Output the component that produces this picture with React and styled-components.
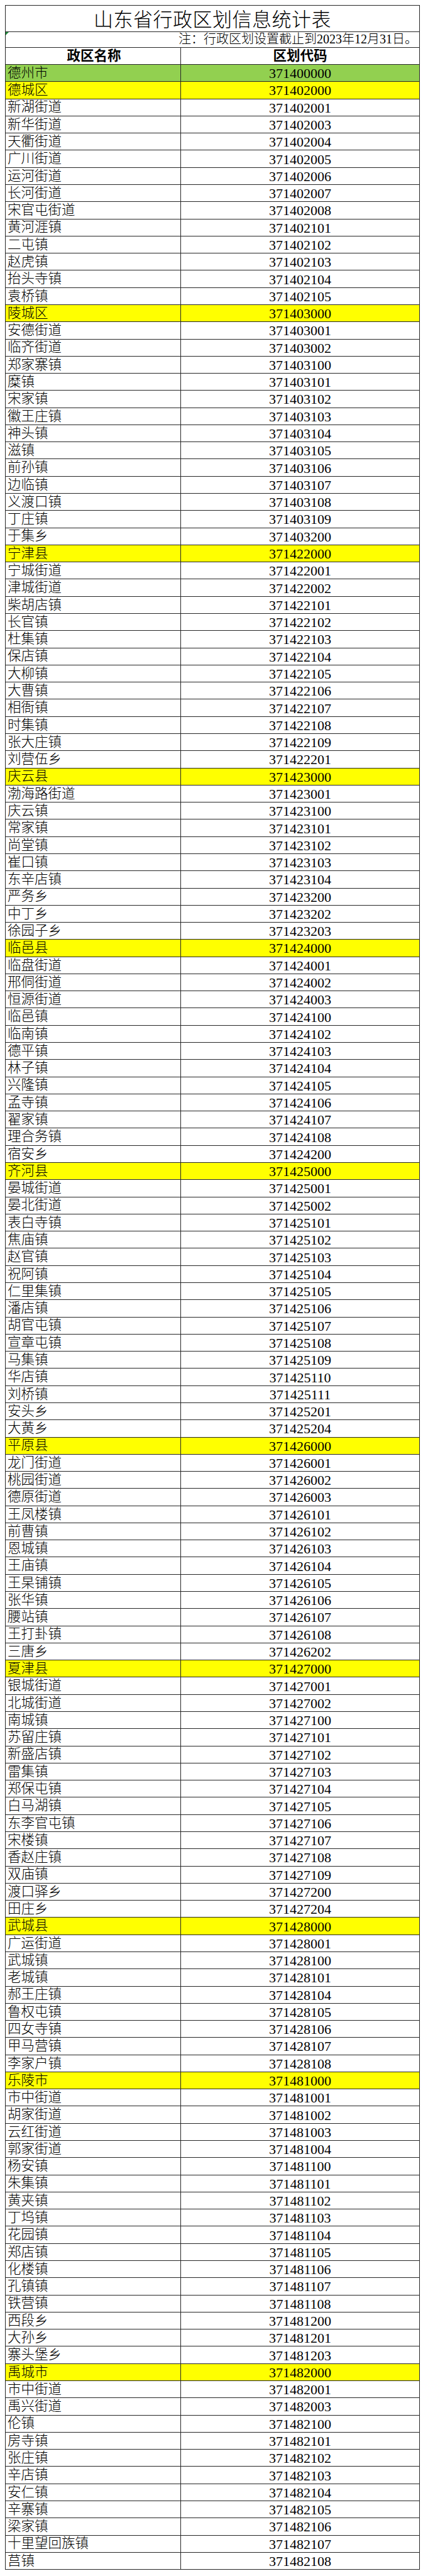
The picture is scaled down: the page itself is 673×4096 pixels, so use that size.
import React from "react";
import styled, { createGlobalStyle } from "styled-components";

const GlobalStyle = createGlobalStyle`
  html, body {
    margin: 0;
    padding: 0;
    background: #ffffff;
  }
  body {
    font-family: "Liberation Serif", "Noto Sans CJK SC", serif;
    color: #000;
  }
`;

const Page = styled.div`
  padding: 8px 0 0 8px;
`;

const Sheet = styled.div`
  width: 660px;
  border: 1px solid #262626;
  box-sizing: border-box;
  display: flex;
  flex-direction: column;
`;

const TitleRow = styled.div`
  height: 41px;
  box-sizing: border-box;
  display: flex;
  align-items: center;
  justify-content: center;
  padding-top: 3px;
  font-size: 31px;
  font-weight: 300;
  letter-spacing: 0.5px;
  line-height: 1;
`;

const NoteRow = styled.div`
  position: relative;
  height: 25px;
  box-sizing: border-box;
  border-top: 1px solid #262626;
  display: flex;
  align-items: flex-end;
  justify-content: flex-end;
  padding: 0 3px 3px 0;
  font-size: 20px;
  font-weight: 300;
  line-height: 1;
`;

const ErrorMark = styled.span`
  position: absolute;
  top: 0;
  left: 0;
  width: 0;
  height: 0;
  border-top: 5px solid #1e8a3a;
  border-right: 5px solid transparent;
`;

const Row = styled.div`
  display: grid;
  grid-template-columns: 279px 1fr;
  height: ${(p) => p.$h}px;
  box-sizing: border-box;
  border-top: 1px solid #262626;
  background: ${(p) => p.$bg || "transparent"};
`;

const NameCell = styled.div`
  display: flex;
  align-items: center;
  justify-content: ${(p) => (p.$center ? "center" : "flex-start")};
  padding: 1px 0 0 3px;
  border-right: 1px solid #262626;
  font-size: 21.5px;
  font-weight: ${(p) => (p.$bold ? 700 : 300)};
  line-height: 1;
  white-space: nowrap;
  overflow: hidden;
`;

const CodeCell = styled.div`
  display: flex;
  align-items: center;
  justify-content: center;
  padding-top: 2px;
  font-size: ${(p) => (p.$bold ? "21.5px" : "22px")};
  font-weight: ${(p) => (p.$bold ? 700 : 400)};
  line-height: 1;
`;

const rows = [
  ["德州市", "371400000", "city"],
  ["德城区", "371402000", "county"],
  ["新湖街道", "371402001"],
  ["新华街道", "371402003"],
  ["天衢街道", "371402004"],
  ["广川街道", "371402005"],
  ["运河街道", "371402006"],
  ["长河街道", "371402007"],
  ["宋官屯街道", "371402008"],
  ["黄河涯镇", "371402101"],
  ["二屯镇", "371402102"],
  ["赵虎镇", "371402103"],
  ["抬头寺镇", "371402104"],
  ["袁桥镇", "371402105"],
  ["陵城区", "371403000", "county"],
  ["安德街道", "371403001"],
  ["临齐街道", "371403002"],
  ["郑家寨镇", "371403100"],
  ["糜镇", "371403101"],
  ["宋家镇", "371403102"],
  ["徽王庄镇", "371403103"],
  ["神头镇", "371403104"],
  ["滋镇", "371403105"],
  ["前孙镇", "371403106"],
  ["边临镇", "371403107"],
  ["义渡口镇", "371403108"],
  ["丁庄镇", "371403109"],
  ["于集乡", "371403200"],
  ["宁津县", "371422000", "county"],
  ["宁城街道", "371422001"],
  ["津城街道", "371422002"],
  ["柴胡店镇", "371422101"],
  ["长官镇", "371422102"],
  ["杜集镇", "371422103"],
  ["保店镇", "371422104"],
  ["大柳镇", "371422105"],
  ["大曹镇", "371422106"],
  ["相衙镇", "371422107"],
  ["时集镇", "371422108"],
  ["张大庄镇", "371422109"],
  ["刘营伍乡", "371422201"],
  ["庆云县", "371423000", "county"],
  ["渤海路街道", "371423001"],
  ["庆云镇", "371423100"],
  ["常家镇", "371423101"],
  ["尚堂镇", "371423102"],
  ["崔口镇", "371423103"],
  ["东辛店镇", "371423104"],
  ["严务乡", "371423200"],
  ["中丁乡", "371423202"],
  ["徐园子乡", "371423203"],
  ["临邑县", "371424000", "county"],
  ["临盘街道", "371424001"],
  ["邢侗街道", "371424002"],
  ["恒源街道", "371424003"],
  ["临邑镇", "371424100"],
  ["临南镇", "371424102"],
  ["德平镇", "371424103"],
  ["林子镇", "371424104"],
  ["兴隆镇", "371424105"],
  ["孟寺镇", "371424106"],
  ["翟家镇", "371424107"],
  ["理合务镇", "371424108"],
  ["宿安乡", "371424200"],
  ["齐河县", "371425000", "county"],
  ["晏城街道", "371425001"],
  ["晏北街道", "371425002"],
  ["表白寺镇", "371425101"],
  ["焦庙镇", "371425102"],
  ["赵官镇", "371425103"],
  ["祝阿镇", "371425104"],
  ["仁里集镇", "371425105"],
  ["潘店镇", "371425106"],
  ["胡官屯镇", "371425107"],
  ["宣章屯镇", "371425108"],
  ["马集镇", "371425109"],
  ["华店镇", "371425110"],
  ["刘桥镇", "371425111"],
  ["安头乡", "371425201"],
  ["大黄乡", "371425204"],
  ["平原县", "371426000", "county"],
  ["龙门街道", "371426001"],
  ["桃园街道", "371426002"],
  ["德原街道", "371426003"],
  ["王凤楼镇", "371426101"],
  ["前曹镇", "371426102"],
  ["恩城镇", "371426103"],
  ["王庙镇", "371426104"],
  ["王杲铺镇", "371426105"],
  ["张华镇", "371426106"],
  ["腰站镇", "371426107"],
  ["王打卦镇", "371426108"],
  ["三唐乡", "371426202"],
  ["夏津县", "371427000", "county"],
  ["银城街道", "371427001"],
  ["北城街道", "371427002"],
  ["南城镇", "371427100"],
  ["苏留庄镇", "371427101"],
  ["新盛店镇", "371427102"],
  ["雷集镇", "371427103"],
  ["郑保屯镇", "371427104"],
  ["白马湖镇", "371427105"],
  ["东李官屯镇", "371427106"],
  ["宋楼镇", "371427107"],
  ["香赵庄镇", "371427108"],
  ["双庙镇", "371427109"],
  ["渡口驿乡", "371427200"],
  ["田庄乡", "371427204"],
  ["武城县", "371428000", "county"],
  ["广运街道", "371428001"],
  ["武城镇", "371428100"],
  ["老城镇", "371428101"],
  ["郝王庄镇", "371428104"],
  ["鲁权屯镇", "371428105"],
  ["四女寺镇", "371428106"],
  ["甲马营镇", "371428107"],
  ["李家户镇", "371428108"],
  ["乐陵市", "371481000", "county"],
  ["市中街道", "371481001"],
  ["胡家街道", "371481002"],
  ["云红街道", "371481003"],
  ["郭家街道", "371481004"],
  ["杨安镇", "371481100"],
  ["朱集镇", "371481101"],
  ["黄夹镇", "371481102"],
  ["丁坞镇", "371481103"],
  ["花园镇", "371481104"],
  ["郑店镇", "371481105"],
  ["化楼镇", "371481106"],
  ["孔镇镇", "371481107"],
  ["铁营镇", "371481108"],
  ["西段乡", "371481200"],
  ["大孙乡", "371481201"],
  ["寨头堡乡", "371481203"],
  ["禹城市", "371482000", "county"],
  ["市中街道", "371482001"],
  ["禹兴街道", "371482003"],
  ["伦镇", "371482100"],
  ["房寺镇", "371482101"],
  ["张庄镇", "371482102"],
  ["辛店镇", "371482103"],
  ["安仁镇", "371482104"],
  ["辛寨镇", "371482105"],
  ["梁家镇", "371482106"],
  ["十里望回族镇", "371482107"],
  ["莒镇", "371482108"],
];

const fills = {
  city: "#92d050",
  county: "#ffff00",
};

const ROW_H = 27.29;

export default function App() {
  return (
    <>
      <GlobalStyle />
      <Page>
        <Sheet>
          <TitleRow>山东省行政区划信息统计表</TitleRow>
          <NoteRow>
            <ErrorMark />
            注：行政区划设置截止到2023年12月31日。
          </NoteRow>
          <Row $h={27}>
            <NameCell $center $bold>
              政区名称
            </NameCell>
            <CodeCell $bold>区划代码</CodeCell>
          </Row>
          {rows.map(([name, code, kind], i) => (
            <Row key={i} $h={ROW_H} $bg={fills[kind]}>
              <NameCell>{name}</NameCell>
              <CodeCell>{code}</CodeCell>
            </Row>
          ))}
        </Sheet>
      </Page>
    </>
  );
}
